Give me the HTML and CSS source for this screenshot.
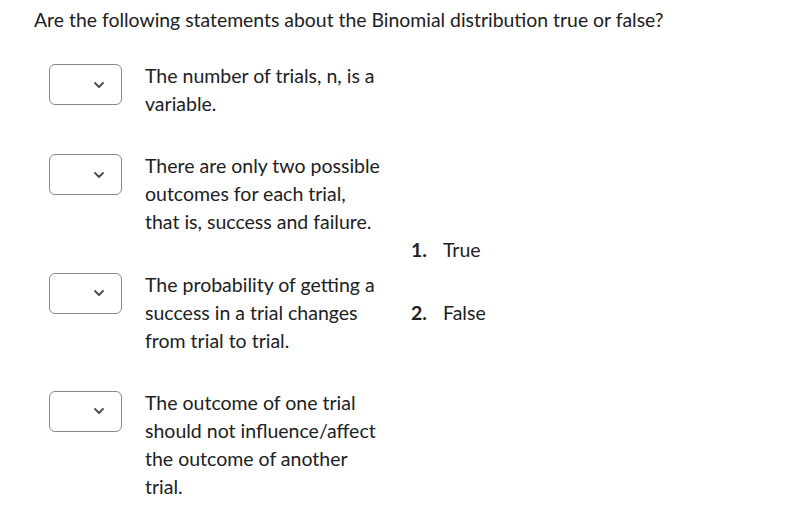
FILE: index.html
```html
<!DOCTYPE html>
<html>
<head>
<meta charset="utf-8">
<link rel="stylesheet" href="styles.css">
</head>
<body>
<div class="page">
  <p class="title">Are the following statements about the Binomial distribution true or false?</p>
  <div class="matching">
    <div class="rows">
      <div class="row">
        <div class="select"><svg width="10" height="6" viewBox="0 0 10 6"><path d="M1 1 L5 5 L9 1" fill="none" stroke="#494c4e" stroke-width="1.8" stroke-linecap="round" stroke-linejoin="round"/></svg></div>
        <div class="stmt">The number of trials, n, is a<br>variable.</div>
      </div>
      <div class="row">
        <div class="select"><svg width="10" height="6" viewBox="0 0 10 6"><path d="M1 1 L5 5 L9 1" fill="none" stroke="#494c4e" stroke-width="1.8" stroke-linecap="round" stroke-linejoin="round"/></svg></div>
        <div class="stmt">There are only two possible<br>outcomes for each trial,<br>that is, success and failure.</div>
      </div>
      <div class="row">
        <div class="select"><svg width="10" height="6" viewBox="0 0 10 6"><path d="M1 1 L5 5 L9 1" fill="none" stroke="#494c4e" stroke-width="1.8" stroke-linecap="round" stroke-linejoin="round"/></svg></div>
        <div class="stmt">The probability of getting a<br>success in a trial changes<br>from trial to trial.</div>
      </div>
      <div class="row">
        <div class="select"><svg width="10" height="6" viewBox="0 0 10 6"><path d="M1 1 L5 5 L9 1" fill="none" stroke="#494c4e" stroke-width="1.8" stroke-linecap="round" stroke-linejoin="round"/></svg></div>
        <div class="stmt">The outcome of one trial<br>should not influence/affect<br>the outcome of another<br>trial.</div>
      </div>
    </div>
    <ol class="choices">
      <li><span class="num">1.</span><span>True</span></li>
      <li><span class="num">2.</span><span>False</span></li>
    </ol>
  </div>
</div>
</body>
</html>
```
FILE: styles.css
```css
html, body {
  margin: 0;
  padding: 0;
  background: #ffffff;
}
body {
  font-family: Lato, "Open Sans", sans-serif;
  color: #202122;
  font-size: 19.5px;
  line-height: 28px;
}
.page {
  padding: 6px 0 0 34px;
}
.title {
  margin: 0 0 28px 0;
  font-size: 19.4px;
}
.matching {
  display: flex;
  align-items: center;
}
.rows {
  display: flex;
  flex-direction: column;
  gap: 34.3px;
  padding-left: 15px;
  width: 338px;
}
.row {
  display: flex;
  align-items: flex-start;
  gap: 23px;
}
.select {
  flex: none;
  width: 73px;
  height: 41px;
  box-sizing: border-box;
  margin-top: 2px;
  border: 1px solid #868a8d;
  border-radius: 6px;
  display: flex;
  align-items: center;
  justify-content: flex-end;
  padding-right: 17px;
}
.select svg {
  display: block;
}
.stmt {
  white-space: nowrap;
}
.choices {
  list-style: none;
  margin: 0 0 0 24px;
  padding: 0;
  display: flex;
  flex-direction: column;
  gap: 35px;
}
.choices li {
  display: flex;
}
.num {
  font-weight: 700;
  width: 32px;
}
```
